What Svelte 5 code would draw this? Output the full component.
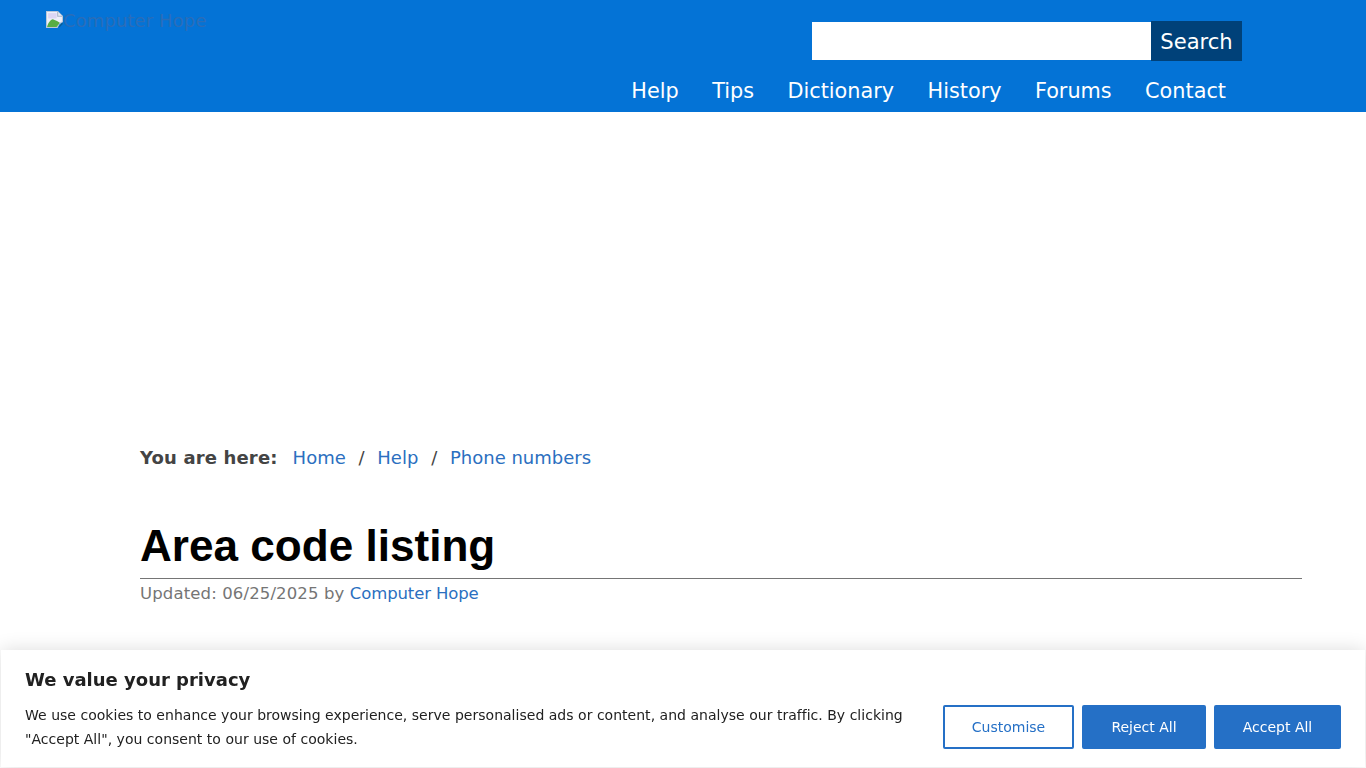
<script>
  const nav = ['Help', 'Tips', 'Dictionary', 'History', 'Forums', 'Contact'];
  const crumbs = ['Home', 'Help', 'Phone numbers'];
</script>

<header class="header">
  <div class="logo">
    <svg class="broken" width="17" height="17" viewBox="0 0 16 16" aria-hidden="true">
      <path d="M0.5 0.5h10.5l4.5 4.5v5l-3 2-2 3.5H0.5z" fill="#eef0fa" stroke="#bcc6d8" />
      <path d="M2 2h8v5H2z" fill="#dcd6f4" />
      <path d="M1 15c1-4 4-8 6-7 2 1 5 2 6 3l-3 4z" fill="#58ad45" />
      <path d="M11 0.5v4.5h4.5" fill="#e4eaf2" stroke="#aab6c8" />
      <path d="M12 15l3-4 1 1-3 3z" fill="#0b5d8f" />
    </svg>
    <span class="alt">Computer Hope</span>
  </div>
  <div class="right">
    <form class="search" onsubmit={(e) => e.preventDefault()}>
      <input class="field" type="text" aria-label="Search" />
      <button class="go">Search</button>
    </form>
    <nav class="nav">
      {#each nav as item}
        <a href="#top">{item}</a>
      {/each}
    </nav>
  </div>
</header>

<main class="main">
  <div class="crumbs">
    <b>You are here:</b>
    {#each crumbs as c, i}
      {#if i > 0}<span class="sep">/</span>{/if}
      <a href="#top">{c}</a>
    {/each}
  </div>
  <h1>Area code listing</h1>
  <p class="updated">Updated: 06/25/2025 by <a href="#top">Computer Hope</a></p>
</main>

<aside class="cookie">
  <div class="cookie-text">
    <h2>We value your privacy</h2>
    <p>We use cookies to enhance your browsing experience, serve personalised ads or content, and analyse our traffic. By clicking "Accept All", you consent to our use of cookies.</p>
  </div>
  <div class="cookie-btns">
    <button class="btn outline">Customise</button>
    <button class="btn reject">Reject All</button>
    <button class="btn accept">Accept All</button>
  </div>
</aside>

<style>
  :global(body) {
    margin: 0;
    background: #fff;
    font-family: "DejaVu Sans", sans-serif;
    overflow: hidden;
  }
  .header {
    height: 112px;
    background: #0473d6;
    display: flex;
    justify-content: space-between;
    box-sizing: border-box;
  }
  .logo {
    display: flex;
    align-items: flex-start;
    padding: 11px 0 0 46px;
    height: 17px;
  }
  .broken { flex: none; }
  .alt {
    margin-top: 1px;
    font-size: 18px;
    line-height: 18px;
    letter-spacing: 0.1px;
    color: #2a6db8;
  }
  .right {
    display: flex;
    flex-direction: column;
    align-items: flex-end;
    padding: 21px 124px 0 0;
  }
  .search { display: flex; }
  .field {
    width: 339px;
    height: 38px;
    margin-top: 1px;
    border: 0;
    padding: 0;
    background: #fff;
    box-sizing: border-box;
  }
  .go {
    width: 91px;
    height: 40px;
    border: 0;
    padding: 0;
    background: #004179;
    color: #fff;
    font: 21.1px "DejaVu Sans", sans-serif;
  }
  .nav {
    display: flex;
    gap: 33.4px;
    margin-top: 17px;
    padding-right: 16px;
  }
  .nav a {
    color: #fff;
    font-size: 20.8px;
    line-height: 27px;
    text-decoration: none;
  }
  .main { padding: 334px 64px 0 140px; }
  .crumbs {
    display: flex;
    align-items: baseline;
    font-size: 18px;
    line-height: 24px;
    color: #444;
  }
  .crumbs b { margin-right: 15px; letter-spacing: 0.15px; }
  .crumbs a, .updated a { color: #2b6fc0; text-decoration: none; }
  .sep { margin: 0 12.75px; }
  h1 {
    margin: 50px 0 0;
    padding-bottom: 6px;
    border-bottom: 1px solid #757575;
    font: bold 44.1px/52px "Liberation Sans", Arial, sans-serif;
    color: #000;
  }
  .updated {
    margin: 5px 0 0;
    font-size: 16.5px;
    line-height: 20px;
    letter-spacing: 0.13px;
    color: #757575;
  }
  .updated a { letter-spacing: -0.13px; }
  .cookie {
    position: fixed;
    left: 1px;
    right: 1px;
    bottom: 1px;
    height: 117px;
    box-sizing: border-box;
    padding: 18px 24px 0;
    background: #fff;
    box-shadow: 0 0 18px rgba(0, 0, 0, 0.14);
    display: flex;
    justify-content: space-between;
    color: #212121;
  }
  .cookie-text { width: 885px; }
  h2 {
    margin: 0;
    font-size: 18px;
    line-height: 24px;
    font-weight: bold;
  }
  .cookie p {
    margin: 11px 0 0;
    font-size: 14px;
    line-height: 24px;
    letter-spacing: 0.02px;
  }
  .cookie-btns {
    display: flex;
    gap: 8px;
    margin-top: 37px;
    height: 44px;
  }
  .btn {
    box-sizing: border-box;
    height: 44px;
    border: 2px solid #2570c6;
    border-radius: 2px;
    padding: 0;
    font: 14px "DejaVu Sans", sans-serif;
    background: #2570c6;
    color: #fff;
  }
  .outline { width: 131px; background: #fff; color: #2570c6; }
  .reject { width: 124px; }
  .accept { width: 127px; }
</style>
